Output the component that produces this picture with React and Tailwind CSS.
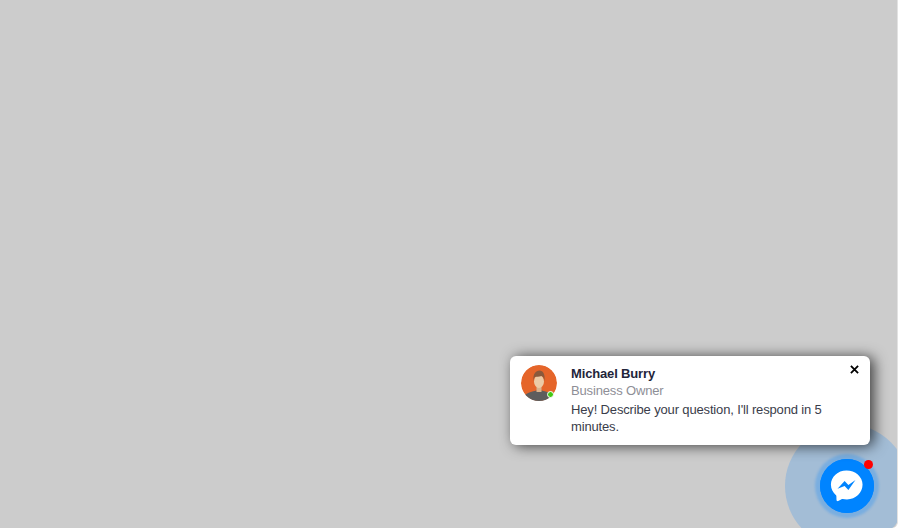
import React from 'react';

const Avatar = () => (
  <div className="relative w-9 h-9 shrink-0">
    <svg viewBox="0 0 36 36" className="w-9 h-9 rounded-full">
      <circle cx="18" cy="18" r="18" fill="#e5652a" />
      <path d="M3 36 V31 C6 27.5 12 26.5 15 25.5 H21 C24 26.5 30 27.5 33 31 V36 Z" fill="#5d5d5d" />
      <rect x="15.5" y="20" width="5" height="7" fill="#d9b48f" />
      <ellipse cx="18" cy="16.5" rx="5" ry="6.5" fill="#eccba6" />
      <path d="M12.6 16 C11.5 9 15 5.5 18.5 5.5 C22 5.5 24.5 9.5 23.4 16 C23 13 22 11.5 20.5 11 C18 12 15 11.5 13.8 12 C13 13 12.8 14.5 12.6 16 Z" fill="#8a5a3c" />
    </svg>
    <span className="absolute right-[3px] bottom-[3px] w-[7px] h-[7px] rounded-full bg-[#44c814] border border-white" />
  </div>
);

const Messenger = () => (
  <svg viewBox="0 0 36 36" className="w-[35px] h-[34px]">
    <path
      fill="#fff"
      d="M18 1.5C8.7 1.5 1.5 8.3 1.5 16.5c0 4.8 2.2 8.6 5.4 11.4.3.2.4.6.4 1l.1 4c0 .9 1 1.5 1.8 1.1l4-2.2c.3-.1.6-.2.9-.1 1.2.3 2.6.5 4.4.5 9.3 0 16.5-7.2 16.5-15.7S27.3 1.5 18 1.5z"
    />
    <path fill="#0084ff" d="M8.5 21 L16 12.7 L20 17 L27.5 11.6 L20 22.2 L16 18 Z" />
  </svg>
);

const App = () => {
  return (
    <div className="h-screen w-full overflow-hidden bg-[#cccccc] font-['Liberation_Sans',sans-serif] flex flex-col items-end justify-end pr-[23px] pb-[15px] gap-[14px] border-r border-[#e2e2e2] rounded-br-[6px]">
      <div className="relative z-10 mr-[4px] w-[360px] h-[89px] flex gap-[14px] bg-white rounded-md pl-[11px] pt-[9px] pr-[30px] shadow-[4px_1px_14px_rgba(0,0,0,0.7)]">
        <Avatar />
        <div className="text-[13px] leading-[17px] tracking-[-0.15px] text-[#3a3d4a]">
          <div className="font-bold text-[#23253a]">Michael Burry</div>
          <div className="text-[#8e8e96]">Business Owner</div>
          <p className="mt-[2px]">Hey! Describe your question, I'll respond in 5 minutes.</p>
        </div>
        <svg viewBox="0 0 10 10" className="absolute right-[11px] top-[9px] w-[9px] h-[9px]">
          <path d="M1 1 L9 9 M9 1 L1 9" stroke="#000" strokeWidth="2" />
        </svg>
      </div>

      <div className="relative w-[54px] h-[54px] rounded-full bg-[#0084ff] flex items-center justify-center">
        <div className="absolute -inset-[35px] rounded-full bg-[#0084ff]/20" />
        <div className="absolute -inset-[5px] rounded-full bg-[#0084ff]/25 blur-[1px]" />
        <div className="absolute inset-0 rounded-full bg-[#0084ff]" />
        <div className="relative flex -translate-x-px">
          <Messenger />
        </div>
        <span className="absolute right-[1px] top-[1px] w-[9px] h-[9px] rounded-full bg-[#ff0000]" />
      </div>
    </div>
  );
};

export default App;
